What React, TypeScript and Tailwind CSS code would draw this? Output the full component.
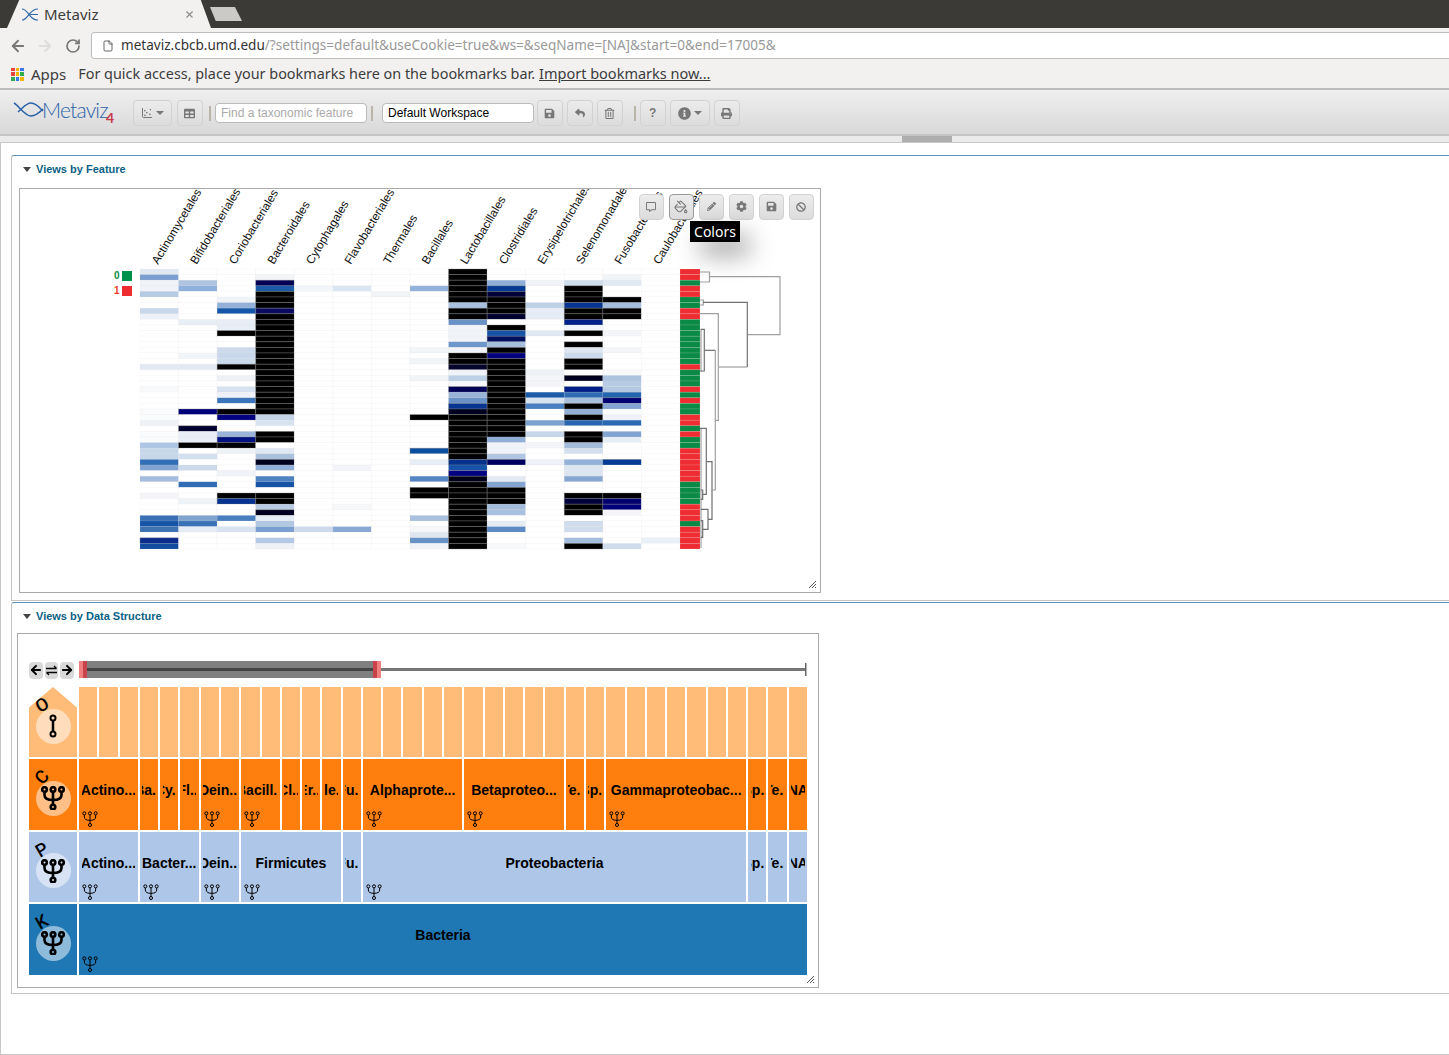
import React from 'react';
import { ArrowLeft, ArrowRight, RotateCw, File, X, PaintBucket, ChartScatter } from 'lucide-react';
import { FaInfoCircle, FaSave, FaReply, FaRegTrashAlt, FaPrint, FaRegCommentAlt, FaPencilAlt, FaCog, FaBan, FaTable } from 'react-icons/fa';

const k = '#000000';

const labels = ['Actinomycetales', 'Bifidobacteriales', 'Coriobacteriales', 'Bacteroidales', 'Cytophagales', 'Flavobacteriales', 'Thermales', 'Bacillales', 'Lactobacillales', 'Clostridiales', 'Erysipelotrichales', 'Selenomonadales', 'Fusobacteriales', 'Caulobacterales'];

// row -> colour, per heatmap column
const heat: Record<number, string>[] = [
  { 0: '#e0e8f2', 1: '#7a9fd0', 2: '#f0f3f8', 3: '#f0f3f8', 4: '#b5cbe4', 7: '#c8d7ea', 8: '#edf1f8', 17: '#e2e9f3', 21: '#f7f9fb', 25: '#fafbfc', 26: '#fafbfc', 27: '#eef2f6', 29: '#fafbfc', 30: '#fafbfc', 31: '#adc6e5', 32: '#c6d7ea', 33: '#c6d7ea', 34: '#3270b5', 35: '#80a3d2', 37: '#a4bcde', 40: '#f3f5f9', 44: '#3a71b5', 45: '#1654a8', 46: '#3e72b3', 48: '#0c2c8c', 49: '#124ca0' },
  { 2: '#aec4e0', 3: '#8fb0da', 9: '#e9eff6', 15: '#f2f5f8', 17: '#e2e9f3', 25: '#00007a', 28: '#000030', 29: '#e9eef6', 30: '#e9eef6', 31: k, 33: '#d3e0ef', 35: '#ccdaeb', 38: '#2f6cb4', 41: '#eef3f8', 44: '#80a3cf', 45: '#3a72b8', 46: '#e5ecf5' },
  { 5: '#f0f3f8', 6: '#93b1d8', 7: '#1556a8', 9: '#e8eef6', 10: '#e8eef6', 11: k, 14: '#ccdaec', 15: '#c8d7ea', 16: '#c9d9ea', 17: k, 19: '#eef2f6', 21: '#d6e1ef', 22: '#eef2f8', 23: '#3a74ba', 25: k, 26: '#020280', 29: '#9ab4d8', 30: '#00107f', 31: k, 32: '#edf2f7', 36: '#f0f3f8', 40: k, 41: '#06338f', 44: '#4a7fbf', 46: '#d8e2f0' },
  { 1: '#f3f5f8', 2: '#000055', 3: '#1a5aa8', 4: k, 5: k, 6: k, 7: '#0a0a60', 8: k, 9: k, 10: k, 11: k, 12: k, 13: k, 14: k, 15: k, 16: k, 17: k, 18: k, 19: k, 20: k, 21: k, 22: k, 23: k, 24: k, 25: k, 26: '#c5d4e8', 27: '#d8e3f1', 29: k, 30: k, 32: '#dfe7f2', 33: '#aac0dd', 34: '#00001f', 35: '#93b0d8', 37: '#4f82c0', 38: '#1652a5', 40: k, 41: k, 42: '#b8cbe2', 43: '#000020', 44: '#e8eef6', 45: '#b1c7e2', 46: '#7a9fd0', 48: '#b3c9e6', 49: '#eef2f6' },
  { 3: '#f2f5f9', 46: '#ccdaeb' },
  { 3: '#dce6f2', 35: '#f3f5f8', 42: '#f7f8fa', 46: '#8aa8d4' },
  { 4: '#f2f5f8' },
  { 3: '#93b2da', 14: '#f2f5f8', 16: '#f2f5f8', 19: '#f2f5f8', 26: k, 32: '#0a4ea0', 34: '#e8eef6', 37: '#5585c2', 39: k, 40: k, 44: '#a9c0de', 46: '#f5f7fa', 47: '#dfe6f0', 48: '#6792c8', 49: '#f0f3f7' },
  { 0: k, 1: k, 2: k, 3: k, 4: k, 5: k, 6: '#a9c0de', 7: k, 8: k, 9: '#6a92c6', 10: '#f0f3f8', 11: '#f0f3f8', 12: '#f0f3f8', 13: '#6d96ca', 14: '#f0f3f8', 15: k, 16: k, 17: '#06062c', 18: '#eff2f8', 19: '#bcd0e6', 20: '#f5f7fa', 21: '#000055', 22: '#9ab4d8', 23: '#6a92c6', 24: '#073491', 25: '#000020', 26: k, 27: k, 28: k, 29: k, 30: k, 31: k, 32: k, 33: k, 34: '#06328c', 35: '#1752a8', 36: '#000080', 37: '#000018', 38: k, 39: k, 40: k, 41: k, 42: k, 43: k, 44: k, 45: k, 46: k, 47: k, 48: k, 49: k },
  { 2: '#8fafd8', 3: '#073a93', 4: '#00003a', 5: k, 6: k, 7: k, 8: '#00002f', 10: k, 11: '#1652a6', 12: '#00105f', 13: '#a6bfdd', 14: k, 15: '#000080', 16: k, 17: k, 18: k, 19: k, 20: k, 21: k, 22: k, 23: k, 24: k, 25: k, 26: k, 27: k, 28: k, 29: k, 30: '#90aed6', 31: '#f0f3f8', 32: '#f0f3f8', 33: '#b0c6e0', 34: '#000060', 37: '#e3eaf3', 38: '#83a4d0', 39: k, 40: k, 41: k, 42: '#a4bddd', 43: '#a8c1e0', 45: '#e3ebf3', 46: '#5c8ac4', 49: '#f7f9fb' },
  { 2: '#f0f3f8', 6: '#bed0e6', 7: '#e6ecf5', 8: '#e6ecf5', 11: '#dfe8f3', 18: '#eef2f7', 19: '#f3f5f8', 20: '#f3f5f8', 22: '#1a5aa8', 23: '#d8e3f0', 24: '#4a7fc0', 27: '#7ea2cf', 29: '#c5d6ea', 31: '#f3f5f8', 34: '#eef2f8' },
  { 2: '#cfdcec', 3: k, 4: k, 5: k, 6: '#073491', 7: k, 8: k, 9: '#00208a', 10: '#f2f5f9', 11: k, 13: k, 14: '#dde6f1', 15: '#ccdaeb', 16: k, 17: k, 19: '#00001f', 21: '#001e8a', 22: '#2f6bb2', 23: '#a8c0dd', 24: k, 25: '#90aed6', 26: k, 27: '#2a66b0', 29: k, 30: k, 31: '#a3bcdb', 32: '#d4e0ee', 34: '#94b2d8', 35: '#dce6f0', 36: '#dce6f0', 37: '#87a6d2', 40: k, 41: '#00003c', 42: k, 43: k, 45: '#cfdcec', 46: '#cfdcec', 48: '#a3bddd', 49: k },
  { 1: '#f2f5f8', 2: '#e0e8f2', 5: k, 6: '#a3bcdb', 7: k, 8: k, 11: '#f3f5f9', 14: '#f3f5f8', 18: '#f7f8fa', 19: '#acc3e0', 20: '#b6cbe4', 21: '#b3c9e2', 22: '#2565ae', 23: '#000070', 24: '#83a5d2', 25: '#fafbfc', 26: '#eef2f8', 27: '#2b68b2', 29: '#82a4d1', 30: '#e8eef6', 34: '#043a95', 40: k, 41: '#000070', 42: '#00007a', 43: '#f3f5f8', 49: '#cedcec' },
  { 48: '#eaf0f7' },
];

const barRuns: [number, string][] = [[2, 'r'], [1, 'g'], [2, 'r'], [2, 'g'], [2, 'r'], [8, 'g'], [1, 'r'], [3, 'g'], [1, 'r'], [1, 'g'], [1, 'r'], [2, 'g'], [2, 'r'], [1, 'g'], [1, 'r'], [2, 'g'], [6, 'r'], [4, 'g'], [3, 'r'], [1, 'g'], [4, 'r']];
const bars = barRuns.flatMap(([n, c]) => Array(n).fill(c === 'r' ? '#ee2d33' : '#0b8a45'));

const lightTree = ['M700 272H709.5V282H700', 'M709.5 276.7H780V334.7H747.3', 'M700 313.7H718.3V420.3H715.3', 'M718.3 367H747.3', 'M715.3 350.3V490H712.7', 'M700 300H703.3V305H700', 'M701 330V372', 'M701 428V548'];
const darkTree = ['M703 302.3H747.3V367', 'M705 350.3H715.3', 'M700.5 329.3H704.3V371H700.5', 'M700 428.3H706.3V494.3H702.7', 'M706.5 461.7H712V519.3H708', 'M700.7 490H702.7V499.3H700.7', 'M700.7 509.3H708V529.3H702.7', 'M700.7 520.7H702.7V537.3H700.7'];

type Cell = { span: number; text: string; icon?: boolean };

const classRow: Cell[] = [
  { span: 3, text: 'Actino...', icon: true }, { span: 1, text: 'Ba...' }, { span: 1, text: 'Cy...' }, { span: 1, text: 'Fl...' },
  { span: 2, text: 'Dein...', icon: true }, { span: 2, text: 'Bacill...', icon: true }, { span: 1, text: 'Cl...' }, { span: 1, text: 'Er...' },
  { span: 1, text: 'Fle...' }, { span: 1, text: 'Fu...' }, { span: 5, text: 'Alphaprote...', icon: true }, { span: 5, text: 'Betaproteo...', icon: true },
  { span: 1, text: 'Te...' }, { span: 1, text: 'Sp...' }, { span: 7, text: 'Gammaproteobac...', icon: true }, { span: 1, text: 'Sp...' }, { span: 1, text: 'Te...' }, { span: 1, text: 'NA' },
];
const phylumRow: Cell[] = [
  { span: 3, text: 'Actino...', icon: true }, { span: 3, text: 'Bacter...', icon: true }, { span: 2, text: 'Dein...', icon: true },
  { span: 5, text: 'Firmicutes', icon: true }, { span: 1, text: 'Fu...' }, { span: 19, text: 'Proteobacteria', icon: true },
  { span: 1, text: 'Sp...' }, { span: 1, text: 'Te...' }, { span: 1, text: 'NA' },
];

const spanClass: Record<number, string> = {
  1: 'col-span-1', 2: 'col-span-2', 3: 'col-span-3', 5: 'col-span-5', 7: 'col-span-7', 19: 'col-[span_19]', 36: 'col-[span_36]',
};

function Trident({ size, stroke }: { size: number; stroke: number }) {
  return (
    <svg width={size} height={size} viewBox="0 0 24 24" fill="none" stroke="#000" strokeWidth={stroke}>
      <circle cx="3.5" cy="3.5" r="2.3" />
      <circle cx="12" cy="3.5" r="2.3" />
      <circle cx="20.5" cy="3.5" r="2.3" />
      <circle cx="12" cy="21" r="2.3" />
      <path d="M3.5 6v3q0 5 8.500 5t8.500-5V6M12 6v13" />
    </svg>
  );
}

function LevelLabel({ letter, bg, rotate, children, house }: { letter: string; bg: string; rotate: string; children: React.ReactNode; house?: boolean }) {
  return (
    <div className={`relative w-[48px] shrink-0 ${bg} ${house ? '[clip-path:polygon(50%_0,100%_29%,100%_100%,0_100%,0_29%)]' : ''}`}>
      <div className="absolute left-[6.5px] top-[21.5px] flex h-[35px] w-[35px] items-center justify-center rounded-full bg-white/50">{children}</div>
      <span className={`absolute left-[6px] top-[8px] w-[14px] text-center font-['Roboto',sans-serif] text-[18px] font-medium leading-[20px] text-black ${rotate}`}>{letter}</span>
    </div>
  );
}

function TreeCell({ cell, bg }: { cell: Cell; bg: string }) {
  return (
    <div className={`${spanClass[cell.span]} ${bg} flex min-w-0 flex-col px-[2.5px]`}>
      <div className="mt-[23px] flex h-[16px] justify-center overflow-hidden whitespace-nowrap text-[14px] font-bold leading-[16px] text-black">{cell.text}</div>
      {cell.icon && <div className="mt-[13px] pl-[0.5px]"><Trident size={16} stroke={1.5} /></div>}
    </div>
  );
}

function ToolButton({ children, w = 'w-[25.5px]', active }: { children: React.ReactNode; w?: string; active?: boolean }) {
  return (
    <div className={`${w} flex h-[25.5px] shrink-0 items-center justify-center rounded-[4px] border bg-gradient-to-b from-[#ececec] to-[#dcdcdc] text-[#777] ${active ? 'border-[#9a9a9a] text-[#444]' : 'border-[#d2d2d2]'}`}>
      {children}
    </div>
  );
}

function Separator() {
  return <div className="h-[15px] w-[2px] shrink-0 bg-[#b9b5a8]" />;
}

function Caret() {
  return <div className="ml-[3px] h-0 w-0 border-x-[4px] border-t-[4px] border-x-transparent border-t-[#777]" />;
}

function SectionTitle({ title }: { title: string }) {
  return (
    <div className="flex h-[14px] items-center gap-[5px] pl-[11px]">
      <div className="h-0 w-0 border-x-[4px] border-t-[5px] border-x-transparent border-t-[#444]" />
      <span className="text-[11px] font-bold leading-[14px] text-[#0b5f85]">{title}</span>
    </div>
  );
}

function ResizeGrip() {
  return (
    <svg className="absolute bottom-[3px] right-[3px]" width="9" height="9" viewBox="0 0 9 9" stroke="#555" strokeWidth="1">
      <path d="M1 8 8 1M4 8 8 4M7 8 8 7" />
    </svg>
  );
}

export default function App() {
  return (
    <div className="h-[1055px] w-[1449px] overflow-hidden bg-white font-['Liberation_Sans',sans-serif]">
      {/* Browser tabs */}
      <div className="flex h-[28px] bg-[#3b3a36]">
        <div className="ml-[7px] flex h-[28px] w-[204px] items-center bg-[#f2f1f0] pl-[15px] pr-[16px] [clip-path:polygon(0_100%,6%_0,95%_0,100%_100%)]">
          <svg width="17" height="13" viewBox="0 0 17 13" fill="none" stroke="#2f68a8" strokeWidth="1.2">
            <path d="M0 1c3 0 5 3 7 5.500s4 5.500 9 5.500M0 12c3 0 5-3 7-5.500s4-5.500 9-5.500M8 6.500h8" />
          </svg>
          <span className="ml-[5px] flex-1 font-['Noto_Sans',sans-serif] text-[15px] leading-[28px] text-[#3c3c3c]">Metaviz</span>
          <X size={11} strokeWidth={2.4} className="text-[#8a8a8a]" />
        </div>
        <div className="ml-[-1px] mt-[7px] h-[14px] w-[32px] bg-[#cbcac7] [clip-path:polygon(0_0,78%_0,100%_100%,18%_100%)]" />
      </div>

      {/* Address bar */}
      <div className="flex h-[32px] items-center bg-[#f2f1f0] pl-[9px] pt-[3px]">
        <ArrowLeft size={18} strokeWidth={2.4} className="shrink-0 text-[#777]" />
        <ArrowRight size={18} strokeWidth={2.4} className="ml-[9px] shrink-0 text-[#ddd]" />
        <RotateCw size={16} strokeWidth={2.6} className="ml-[11px] shrink-0 text-[#777]" />
        <div className="ml-[10px] flex h-[27px] w-[1400px] shrink-0 items-center rounded-[3px] border border-[#bdbdbd] bg-white pl-[10px]">
          <File size={12} strokeWidth={1.8} className="shrink-0 text-[#555]" />
          <span className="ml-[7px] whitespace-nowrap font-['Noto_Sans',sans-serif] text-[13.55px] text-[#999]">
            <span className="text-[#333]">metaviz.cbcb.umd.edu</span>/?settings=default&amp;useCookie=true&amp;ws=&amp;seqName=[NA]&amp;start=0&amp;end=17005&amp;
          </span>
        </div>
      </div>

      {/* Bookmarks bar */}
      <div className="flex h-[28px] items-center bg-[#f2f1f0] pl-[11px] font-['Noto_Sans',sans-serif] text-[#3c3c3c]">
        <div className="grid h-[13px] w-[13px] grid-cols-3 gap-[1px]">
          {['#e8453c', '#f4b400', '#3b78e7', '#e8453c', '#f4b400', '#34a853', '#34a853', '#3b78e7', '#f4b400'].map((c, i) => (
            <div key={i} style={{ backgroundColor: c }} />
          ))}
        </div>
        <span className="ml-[7px] text-[15px]">Apps</span>
        <span className="ml-[12px] whitespace-nowrap text-[14.4px]">For quick access, place your bookmarks here on the bookmarks bar.</span>
        <span className="ml-[4px] whitespace-nowrap text-[14.5px] underline">Import bookmarks now...</span>
      </div>

      {/* Metaviz toolbar */}
      <div className="flex h-[48px] items-center border-y-2 border-t-[#bcbcbc] border-b-[#c4c4c4] bg-gradient-to-b from-[#efefef] to-[#d9d9d9] pl-[1px] pt-[2px]">
        <div className="relative ml-[12px] flex h-[34px] w-[120px] shrink-0 items-center">
          <svg width="31" height="15" viewBox="0 0 31 15" fill="none" stroke="#2a62a8" strokeWidth="1.5" className="mt-[-7px] shrink-0">
            <path d="M1 1C6 4 12 14 18 14 23 14 27 10 30 7M5 10C10 6 13 1 18 1 23 1 27 6 30 9" />
          </svg>
          <span className="ml-[-2px] mt-[-7px] font-['Lato',sans-serif] text-[21px] font-light leading-[24px] tracking-[-0.8px] text-[#2a62a8]">Metaviz</span>
          <span className="absolute left-[93px] top-[15px] font-['Lato',sans-serif] text-[14px] font-bold leading-[14px] text-[#c6394b]">4</span>
        </div>
        <ToolButton w="w-[39px]"><ChartScatter size={12} /><Caret /></ToolButton>
        <div className="ml-[5px]"><ToolButton><FaTable size={11} /></ToolButton></div>
        <div className="ml-[6.5px]"><Separator /></div>
        <div className="ml-[4px] flex h-[20px] w-[152px] shrink-0 items-center rounded-[4px] border border-[#bbb] bg-white pl-[5px] text-[12px] text-[#aaa]">Find a taxonomic feature</div>
        <div className="ml-[4px]"><Separator /></div>
        <div className="ml-[9px] flex h-[20px] w-[152px] shrink-0 items-center rounded-[4px] border border-[#bbb] bg-white pl-[5px] text-[12px] text-black">Default Workspace</div>
        <div className="ml-[3px]"><ToolButton><FaSave size={11} /></ToolButton></div>
        <div className="ml-[4.5px]"><ToolButton><FaReply size={10} /></ToolButton></div>
        <div className="ml-[4.5px]"><ToolButton><FaRegTrashAlt size={11} /></ToolButton></div>
        <div className="ml-[11px]"><Separator /></div>
        <div className="ml-[4.5px]"><ToolButton><span className="text-[12px] font-bold">?</span></ToolButton></div>
        <div className="ml-[4.5px]"><ToolButton w="w-[40px]"><FaInfoCircle size={13} /><Caret /></ToolButton></div>
        <div className="ml-[3.5px]"><ToolButton w="w-[26px]"><FaPrint size={11} /></ToolButton></div>
      </div>

      {/* Splitter strip */}
      <div className="h-[7px] border-b border-[#c8c8c8] bg-[#ebebeb] pl-[902px]">
        <div className="h-[6px] w-[50px] bg-[#aeaeae]" />
      </div>

      {/* Page body */}
      <div className="h-[912px] overflow-hidden border-b border-l border-[#c8c8c8]">
        {/* Views by Feature */}
        <div className="ml-[10px] mt-[12px] h-[446px] w-[1500px] rounded-tl-[3px] border border-[#c4c4c4] border-t-[#5b90c0] pt-[6px]">
          <SectionTitle title="Views by Feature" />
          <div className="relative ml-[7px] mt-[12px] h-[405px] w-[802px] border border-[#aaa] bg-white">
            <svg className="block" width="800" height="403" viewBox="20 189 800 403" fontFamily="Liberation Sans, sans-serif">
              {labels.map((l, i) => (
                <text key={l} transform={`translate(${158 + 38.57 * i} 265) rotate(-59)`} fontSize="11.7" fill="#111">{l}</text>
              ))}
              <text x="114" y="279" fontSize="10" fontWeight="bold" fill="#0b8a45">0</text>
              <rect x="122" y="271" width="10" height="10" fill="#00924a" />
              <text x="114" y="294" fontSize="10" fontWeight="bold" fill="#ee3a2e">1</text>
              <rect x="122" y="286" width="10" height="10" fill="#ee2d33" />
              {heat.map((col, c) =>
                Array.from({ length: 50 }, (_, r) => {
                  const fill = col[r] ?? '#ffffff';
                  const dark = /^#0/.test(fill);
                  return (
                    <rect key={`${c}-${r}`} x={140 + 38.57 * c} y={269 + 5.6 * r} width="38.57" height="5.6" fill={fill} stroke={dark ? '#888888' : '#d8d8d8'} strokeOpacity={dark ? 0.45 : 0.14} strokeWidth="0.8" />
                  );
                })
              )}
              {bars.map((c, r) => (
                <rect key={r} x="680" y={269 + 5.6 * r} width="20" height="5.6" fill={c} stroke="#ffffff" strokeOpacity="0.2" strokeWidth="0.6" />
              ))}
              <g fill="none" strokeWidth="1.2">
                {lightTree.map((d) => <path key={d} d={d} stroke="#a0a0a0" />)}
                {darkTree.map((d) => <path key={d} d={d} stroke="#707070" />)}
              </g>
            </svg>
            {/* Chart controls sit over the labels */}
            <div className="absolute right-[6px] top-[5px] flex gap-[4.5px]">
              <ToolButton><FaRegCommentAlt size={10} /></ToolButton>
              <ToolButton active><PaintBucket size={14} strokeWidth={1.8} /></ToolButton>
              <ToolButton><FaPencilAlt size={9} /></ToolButton>
              <ToolButton><FaCog size={11} /></ToolButton>
              <ToolButton><FaSave size={11} /></ToolButton>
              <ToolButton><FaBan size={10} /></ToolButton>
            </div>
            <div className="absolute left-[670px] top-[32px] h-[21px] w-[50px] bg-black text-center font-['Noto_Sans',sans-serif] text-[14px] leading-[21px] text-white shadow-[10px_14px_24px_rgba(0,0,0,0.35)]">Colors</div>
            <ResizeGrip />
          </div>
        </div>

        {/* Views by Data Structure */}
        <div className="ml-[10px] mt-[1px] h-[392px] w-[1500px] rounded-tl-[3px] border border-[#c4c4c4] border-t-[#5b90c0] pt-[6px]">
          <SectionTitle title="Views by Data Structure" />
          <div className="relative ml-[5px] mt-[10px] h-[355px] w-[802px] border border-[#aaa] bg-white pl-[11px] pt-[26px]">
            {/* Range slider */}
            <div className="flex h-[20px] items-center">
              <div className="flex h-[17px] w-[45px] gap-[2px]">
                <div className="flex h-[17px] w-[14px] items-center justify-center rounded-[4px] bg-[#d9d9d9] text-black"><ArrowLeft size={14} strokeWidth={3.4} /></div>
                <div className="flex h-[17px] w-[14px] items-center justify-center rounded-[4px] bg-[#d9d9d9]">
                  <svg width="13" height="11" viewBox="0 0 13 11" fill="none" stroke="#000" strokeWidth="1.3">
                    <path d="M1 3.500h10.500M9 1l2.500 2.500M12 7.500H1.500M4 10 1.500 7.500" />
                  </svg>
                </div>
                <div className="flex h-[17px] w-[14px] items-center justify-center rounded-[4px] bg-[#d9d9d9] text-black"><ArrowRight size={14} strokeWidth={3.4} /></div>
              </div>
              <svg className="ml-[5px]" width="730" height="20" viewBox="79 660 730 20">
                <rect x="79" y="661" width="299" height="17" fill="#808080" />
                <rect x="79" y="668" width="726" height="3" fill="#777" />
                <rect x="85" y="668" width="289" height="3" fill="#444" />
                <rect x="805" y="663" width="1.5" height="13" fill="#666" />
                <rect x="79" y="661" width="4" height="17" fill="#f08080" />
                <rect x="83" y="661" width="4" height="17" fill="#c9434b" />
                <rect x="373" y="661" width="4" height="17" fill="#c9434b" />
                <rect x="377" y="661" width="4" height="17" fill="#f08080" />
              </svg>
            </div>

            {/* Icicle levels */}
            <div className="mt-[7px] flex w-[778px] flex-col gap-[2px]">
              <div className="flex h-[70.4px] gap-[2px]">
                <LevelLabel letter="O" bg="bg-[#ffbb78]" rotate="-rotate-30" house>
                  <svg width="12" height="24" viewBox="0 0 12 24" fill="none" stroke="#000" strokeWidth="2">
                    <circle cx="6" cy="4" r="2.5" /><circle cx="6" cy="20" r="2.5" /><path d="M6 6.500v11" strokeWidth="2.5" />
                  </svg>
                </LevelLabel>
                <div className="grid flex-1 grid-cols-[repeat(36,minmax(0,1fr))] gap-x-[2px]">
                  {Array.from({ length: 36 }, (_, i) => <div key={i} className="bg-[#ffbb78]" />)}
                </div>
              </div>
              <div className="flex h-[70.4px] gap-[2px]">
                <LevelLabel letter="C" bg="bg-[#ff7f0e]" rotate="-rotate-45"><Trident size={24} stroke={2.6} /></LevelLabel>
                <div className="grid flex-1 grid-cols-[repeat(36,minmax(0,1fr))] gap-x-[2px]">
                  {classRow.map((c, i) => <TreeCell key={i} cell={c} bg="bg-[#ff7f0e]" />)}
                </div>
              </div>
              <div className="flex h-[70.4px] gap-[2px]">
                <LevelLabel letter="P" bg="bg-[#aec7e8]" rotate="-rotate-30"><Trident size={24} stroke={2.6} /></LevelLabel>
                <div className="grid flex-1 grid-cols-[repeat(36,minmax(0,1fr))] gap-x-[2px]">
                  {phylumRow.map((c, i) => <TreeCell key={i} cell={c} bg="bg-[#aec7e8]" />)}
                </div>
              </div>
              <div className="flex h-[70.4px] gap-[2px]">
                <LevelLabel letter="K" bg="bg-[#1f77b4]" rotate="-rotate-30"><Trident size={24} stroke={2.6} /></LevelLabel>
                <div className="grid flex-1 grid-cols-[repeat(36,minmax(0,1fr))] gap-x-[2px]">
                  <TreeCell cell={{ span: 36, text: 'Bacteria', icon: true }} bg="bg-[#1f77b4]" />
                </div>
              </div>
            </div>
            <ResizeGrip />
          </div>
        </div>
      </div>
    </div>
  );
}
